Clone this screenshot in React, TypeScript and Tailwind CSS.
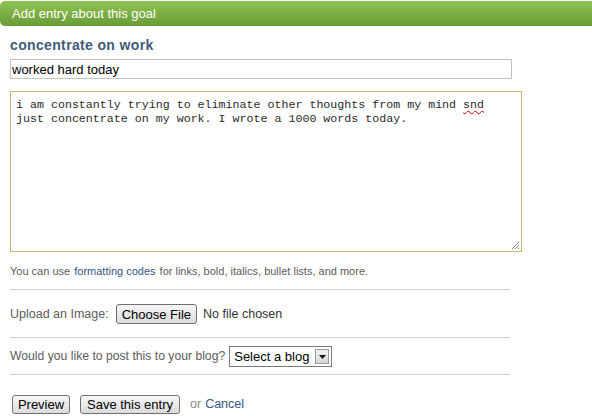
export default function App() {
  return (
    <div className="w-[592px] h-[416px] bg-white font-['Liberation_Sans',Arial,sans-serif] overflow-hidden">
      <div className="mt-px h-[25px] rounded-l-[5px] bg-gradient-to-b from-[#8fc351] to-[#6a9c37] flex items-center pl-3">
        <span className="text-[13px] text-white leading-none">Add entry about this goal</span>
      </div>

      <div className="pl-[10px] w-[522px]">
        <h2 className="mt-[11px] text-[14px] leading-4 font-bold tracking-[0.35px] text-[#3f5b79]">concentrate on work</h2>

        <div className="mt-[6px] w-[502px] h-5 border border-[#c3c3c3] flex items-center pl-[1px]">
          <span className="text-[13px] text-black leading-none">worked hard today</span>
        </div>

        <div className="relative mt-3 w-[512px] h-[161px] border border-[#d2b56b] bg-white pl-[5px] pt-[6px]">
          <p className="font-['Liberation_Mono','Courier_New',monospace] text-[11.65px] leading-[14px] text-[#2a2a2a]">
            i am constantly trying to eliminate other thoughts from my mind{" "}
            <span className="underline decoration-wavy decoration-red-600 decoration-1 underline-offset-2">snd</span>
            <br />
            just concentrate on my work. I wrote a 1000 words today.
          </p>
          <svg className="absolute right-[1px] bottom-[1px]" width="10" height="10" viewBox="0 0 10 10">
            <path d="M9 2 L2 9 M9 5 L5 9 M9 8 L8 9" stroke="#8a8a8a" strokeWidth="1" />
          </svg>
        </div>

        <p className="mt-3 text-[11px] leading-[14px] text-[#5c5c5c]">
          You can use <span className="mx-[1px] text-[#35557f]">formatting codes</span> for links, bold, italics, bullet lists, and more.
        </p>

        <div className="mt-[11px] w-[500px] border-t border-[#cfcfcf]" />

        <div className="mt-[14px] h-5 flex items-center text-[12.5px] text-[#5c5c5c]">
          <span>Upload an Image:</span>
          <button className="ml-[7px] h-5 px-[5px] border border-[#707070] rounded-[3px] bg-gradient-to-b from-[#f6f6f6] to-[#dcdcdc] text-[13px] text-black leading-none">
            Choose File
          </button>
          <span className="ml-[6px] text-[12.5px] text-[#333]">No file chosen</span>
        </div>

        <div className="mt-[13px] w-[500px] border-t border-[#cfcfcf]" />

        <div className="mt-2 h-[21px] flex items-center text-[12.2px] text-[#5c5c5c]">
          <span>Would you like to post this to your blog?</span>
          <div className="ml-[4px] h-[21px] w-[103px] border border-[#7a7a7a] flex items-center justify-between pl-[4px] pr-[2px] bg-white">
            <span className="text-[13px] text-black leading-none">Select a blog</span>
            <span className="w-[14px] h-[15px] border border-[#9a9a9a] bg-gradient-to-b from-[#f2f2f2] to-[#d6d6d6] flex items-center justify-center">
              <svg width="7" height="4" viewBox="0 0 7 4">
                <path d="M0 0 H7 L3.5 4 Z" fill="#111" />
              </svg>
            </span>
          </div>
        </div>

        <div className="mt-[7px] w-[500px] border-t border-[#cfcfcf]" />

        <div className="mt-5 flex items-center text-[12.5px]">
          <button className="ml-[2px] h-[19px] w-[58px] border border-[#707070] rounded-[3px] bg-gradient-to-b from-[#f6f6f6] to-[#dcdcdc] text-[13px] text-black leading-none">
            Preview
          </button>
          <button className="ml-[10px] h-[19px] w-[100px] border border-[#707070] rounded-[3px] bg-gradient-to-b from-[#f6f6f6] to-[#dcdcdc] text-[13px] text-black leading-none">
            Save this entry
          </button>
          <span className="ml-[10px] text-[#8a8a8a]">or</span>
          <span className="ml-[4px] text-[#35557f]">Cancel</span>
        </div>
      </div>
    </div>
  );
}
